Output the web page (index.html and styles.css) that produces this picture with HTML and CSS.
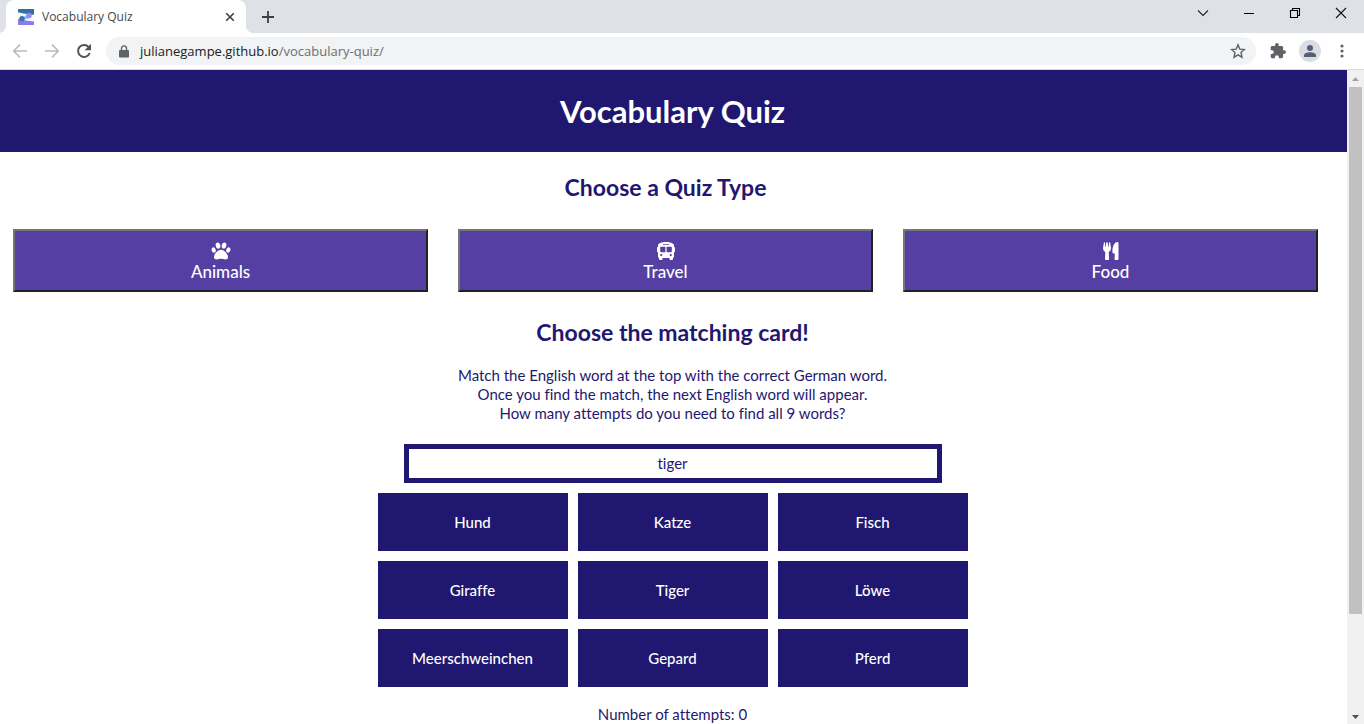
FILE: index.html
```html
<!DOCTYPE html>
<html lang="en">
<head>
<meta charset="utf-8">
<title>Vocabulary Quiz</title>
<link rel="stylesheet" href="styles.css">
</head>
<body>
<div class="tab-strip">
  <div class="tab">
    <svg class="favicon" width="16" height="16" viewBox="0 0 16 16"><path fill="#f4f8ff" d="M0 0h16v16H0z"/><path fill="#33709f" d="M0 0h16v5.500C12 6.500 9 5 6 4.500S2 3.500 0 3.500z"/><path fill="#8f78ee" d="M0 10c3 0 5 1.500 8 1.500s5 1 8 1V16H0z"/><path fill="#8fb8fa" d="M3 8c3 0 5-1 8-2.500l2 3c-3 1-5 2-8 2z"/><circle cx="11" cy="6.500" r="2.700" fill="#8c8cf2"/><circle cx="4" cy="9.700" r="2.700" fill="#3c76a8"/></svg>
    <span class="tab-title">Vocabulary Quiz</span>
    <button class="icon-button" aria-label="Close tab"><svg width="10" height="10" viewBox="0 0 10 10"><path d="M1.200 1.200l7.600 7.600M8.800 1.200L1.200 8.800" stroke="#3c4043" stroke-width="1.600"/></svg></button>
  </div>
  <button class="icon-button new-tab" aria-label="New tab"><svg width="12" height="12" viewBox="0 0 12 12"><path d="M6 0v12M0 6h12" stroke="#3c4043" stroke-width="1.800"/></svg></button>
  <div class="window-controls">
    <button class="icon-button" aria-label="Search tabs"><svg width="12" height="12" viewBox="0 0 12 12"><path d="M1 3.500l5 5 5-5" fill="none" stroke="#222" stroke-width="1.100"/></svg></button>
    <button class="icon-button" aria-label="Minimize"><svg width="12" height="12" viewBox="0 0 12 12"><path d="M1 6.500h10" stroke="#000"/></svg></button>
    <button class="icon-button" aria-label="Restore"><svg width="12" height="12" viewBox="0 0 12 12"><path d="M1.500 3.500h7v7h-7zM3.500 3V1.500h7v7H9" fill="none" stroke="#000" stroke-width="1.100"/></svg></button>
    <button class="icon-button" aria-label="Close window"><svg width="12" height="12" viewBox="0 0 12 12"><path d="M1 1l10 10M11 1L1 11" stroke="#111" stroke-width="1.100"/></svg></button>
  </div>
</div>
<div class="toolbar">
  <div class="nav-buttons">
    <button class="icon-button" aria-label="Back"><svg width="16" height="16" viewBox="0 0 16 16"><path d="M15 8H2M8 1.500L1.800 8 8 14.500" fill="none" stroke="#babcbe" stroke-width="1.700"/></svg></button>
    <button class="icon-button" aria-label="Forward"><svg width="16" height="16" viewBox="0 0 16 16"><path d="M1 8h13M8 1.500L14.200 8 8 14.500" fill="none" stroke="#babcbe" stroke-width="1.700"/></svg></button>
    <button class="icon-button" aria-label="Reload"><svg width="16" height="16" viewBox="0 0 16 16"><path d="M13.700 10A6 6 0 1 1 12.500 3.900" fill="none" stroke="#505458" stroke-width="2"/><path d="M15 .8v6.400H8.600z" fill="#505458"/></svg></button>
  </div>
  <div class="address-bar">
    <svg width="10" height="13" viewBox="0 0 10 13"><path d="M1 5h8a1 1 0 0 1 1 1v5.500a1 1 0 0 1-1 1H1a1 1 0 0 1-1-1V6a1 1 0 0 1 1-1z" fill="#5f6368"/><path d="M2.500 5.500V3.400a2.500 2.500 0 0 1 5 0v2.100" fill="none" stroke="#5f6368" stroke-width="1.400"/></svg>
    <div class="url" role="textbox" contenteditable="true" spellcheck="false" aria-label="Address">julianegampe.github.io<span class="url-path">/vocabulary-quiz/</span></div>
    <button class="icon-button" aria-label="Bookmark this page"><svg width="16" height="16" viewBox="0 0 16 16"><path d="M8 1.800l1.800 4.300 4.700.4-3.500 3.100 1 4.600L8 11.800l-4 2.400 1-4.600-3.500-3.100 4.700-.4z" fill="none" stroke="#5f6368" stroke-width="1.400"/></svg></button>
  </div>
  <div class="toolbar-actions">
    <button class="icon-button" aria-label="Extensions"><svg width="16" height="16" viewBox="1 1 22 22"><path fill="#5f6368" d="M20.500 11H19V7c0-1.100-.9-2-2-2h-4V3.500a2.500 2.500 0 0 0-5 0V5H4c-1.100 0-2 .9-2 2v3.800h1.500a2.700 2.700 0 0 1 0 5.400H2V20c0 1.100.9 2 2 2h3.800v-1.500a2.700 2.700 0 0 1 5.400 0V22H17c1.100 0 2-.9 2-2v-4h1.500a2.500 2.500 0 0 0 0-5z"/></svg></button>
    <button class="icon-button profile" aria-label="Profile"><svg width="14" height="14" viewBox="0 0 14 14"><circle cx="7" cy="4" r="3" fill="#566074"/><path d="M1 13v-1.500C1 9.500 4 8.300 7 8.300s6 1.200 6 3.200V13z" fill="#566074"/></svg></button>
    <button class="icon-button menu" aria-label="Menu"><svg width="4" height="14" viewBox="0 0 4 14"><g fill="#5f6368"><circle cx="2" cy="2" r="1.600"/><circle cx="2" cy="7" r="1.600"/><circle cx="2" cy="12" r="1.600"/></g></svg></button>
  </div>
</div>
<div class="viewport">
  <div class="page">
    <header class="page-header"><h1>Vocabulary Quiz</h1></header>
    <section class="quiz-types">
      <h2>Choose a Quiz Type</h2>
      <div class="type-list">
        <button class="type-button"><svg width="20" height="18" viewBox="0 0 20 18"><g fill="#fff"><ellipse cx="7" cy="3.600" rx="2.300" ry="3.100" transform="rotate(-12 7 3.600)"/><ellipse cx="13" cy="3.600" rx="2.300" ry="3.100" transform="rotate(12 13 3.600)"/><ellipse cx="2.700" cy="8" rx="2" ry="2.700" transform="rotate(-22 2.700 8)"/><ellipse cx="17.300" cy="8" rx="2" ry="2.700" transform="rotate(22 17.300 8)"/><path d="M10 7.800c-3.200 0-7 4.300-7 7.400 0 1.400.9 2.200 2.500 2.200 1.800 0 2.900-.7 4.500-.7s2.700.7 4.500.7c1.600 0 2.500-.8 2.500-2.200 0-3.100-3.800-7.400-7-7.400z"/></g></svg>Animals</button>
        <button class="type-button"><svg width="18" height="18" viewBox="0 0 18 18"><path fill="#fff" fill-rule="evenodd" d="M9 0c4.500 0 8 1.400 8 3.200V5c.6 0 1 .5 1 1v3.200c0 .6-.4 1-1 1v4.200c0 .8-.5 1.200-1 1.400V17a1 1 0 0 1-1 1h-1.500a1 1 0 0 1-1-1v-1h-7v1a1 1 0 0 1-1 1H3a1 1 0 0 1-1-1v-1.200c-.5-.2-1-.6-1-1.400v-4.200c-.6 0-1-.4-1-1V6c0-.5.400-1 1-1V3.200C1 1.400 4.500 0 9 0zM6 2.200v.8h6v-.8zM4.200 4.800c-.6 0-1 .4-1 1v3.400c0 .6.400 1 1 1h4.200V4.800zm5.400 0v5.400h4.200c.6 0 1-.4 1-1V5.800c0-.6-.4-1-1-1zM4.200 12a1.100 1.100 0 1 0 0 2.200 1.100 1.100 0 0 0 0-2.200zm9.600 0a1.100 1.100 0 1 0 0 2.200 1.100 1.100 0 0 0 0-2.200z"/></svg>Travel</button>
        <button class="type-button"><svg width="16" height="18" viewBox="0 0 16 18"><path fill="#fff" d="M.9.500Q1.400 0 2 .5l.3 4.300h.5L3.200.5Q4 0 4.800.5l.4 4.300h.5L6 .5q.6-.5 1.100 0L8 6c0 2-.8 3.300-2.300 4l.4 7q0 1-1 1H3q-1 0-1-1l.3-7C.8 9.300 0 8 0 6zM14.500 0q1 0 1 1v16q0 1-1 1h-2q-1 0-1-1l.4-5.500H10.500q-.9 0-1-.9C9 5.500 11 0 14.500 0z"/></svg>Food</button>
      </div>
    </section>
    <main class="quiz">
      <h2>Choose the matching card!</h2>
      <p class="intro">Match the English word at the top with the correct German word.<br>Once you find the match, the next English word will appear.<br>How many attempts do you need to find all 9 words?</p>
      <div class="prompt">tiger</div>
      <div class="cards">
        <button class="card">Hund</button><button class="card">Katze</button><button class="card">Fisch</button>
        <button class="card">Giraffe</button><button class="card">Tiger</button><button class="card">Löwe</button>
        <button class="card">Meerschweinchen</button><button class="card">Gepard</button><button class="card">Pferd</button>
      </div>
      <p class="attempts">Number of attempts: 0</p>
    </main>
  </div>
  <div class="scrollbar" aria-hidden="true">
    <svg width="17" height="17" viewBox="0 0 17 17"><path d="M5 11l3.500-4 3.500 4z" fill="#a3a3a3"/></svg>
    <div class="track"><div class="thumb"></div></div>
    <svg width="17" height="17" viewBox="0 0 17 17"><path d="M5 8l3.500 4L12 8z" fill="#505050"/></svg>
  </div>
</div>
</body>
</html>
```
FILE: styles.css
```css
* { box-sizing: border-box; }

body {
  margin: 0;
  height: 100vh;
  display: flex;
  flex-direction: column;
  overflow: hidden;
  background: #fff;
  color: #1f1770;
  font-family: Lato, "Liberation Sans", sans-serif;
  font-size: 15px;
  font-variant-ligatures: none;
}

h1, h2, p { margin: 0; }
button { font-family: inherit; font-variant-ligatures: inherit; }
svg { display: block; flex: none; }

.icon-button {
  display: flex;
  align-items: center;
  justify-content: center;
  padding: 0;
  border: 0;
  background: none;
}

/* Browser frame */
.tab-strip {
  flex: none;
  display: flex;
  height: 33px;
  padding-left: 6px;
  background: #dee1e6;
  font-family: "Open Sans", "Noto Sans", sans-serif;
}
.tab {
  position: relative;
  display: flex;
  align-items: center;
  gap: 8px;
  width: 240px;
  padding: 0 11px 0 12px;
  border-radius: 8px 8px 0 0;
  background: #fff;
}
.tab::before, .tab::after {
  content: "";
  position: absolute;
  bottom: 0;
  width: 8px;
  height: 8px;
}
.tab::before { right: 100%; background: radial-gradient(circle at 0 0, #dee1e6 8px, #fff 8px); }
.tab::after { left: 100%; background: radial-gradient(circle at 100% 0, #dee1e6 8px, #fff 8px); }
.tab-title { flex: 1; font-size: 12px; color: #45484c; }
.new-tab { width: 44px; }
.window-controls { display: flex; margin-left: auto; }
.window-controls .icon-button { width: 46px; height: 26px; }

.toolbar {
  flex: none;
  display: flex;
  align-items: center;
  gap: 14px;
  height: 37px;
  padding: 0 20px 0 12px;
  border-bottom: 1px solid #dadce0;
  background: #fff;
}
.nav-buttons { display: flex; gap: 16px; }
.address-bar {
  flex: 1;
  display: flex;
  align-items: center;
  gap: 11px;
  height: 28px;
  padding: 0 10px 0 13px;
  border-radius: 14px;
  background: #f1f3f4;
}
.url {
  flex: 1;
  font-family: "Open Sans", "Noto Sans", sans-serif;
  font-size: 13px;
  line-height: 20px;
  color: #202124;
}
.url-path { color: #6a6e73; }
.toolbar-actions { display: flex; align-items: center; gap: 13px; }
.profile { width: 22px; height: 22px; border-radius: 50%; background: #dadde3; }
.menu { padding-left: 6px; }

/* Page area and scrollbar */
.viewport { flex: 1; display: flex; min-height: 0; }
.page { flex: 1; overflow: hidden; text-align: center; }
.scrollbar { display: flex; flex-direction: column; width: 17px; background: #f1f1f1; }
.track { flex: 1; padding: 0 2px; }
.thumb { height: 85%; background: #c1c1c1; }

.page-header { padding: 20px 2px 20px 0; background: #1f1770; color: #fff; }
h1 { font-size: 31px; line-height: 42px; }
h2 { font-size: 23px; line-height: 30px; }

.quiz-types { padding: 20px 29px 0 13px; }
.type-list { display: grid; grid-template-columns: repeat(3, 1fr); gap: 30px; margin-top: 27px; }
.type-button {
  display: flex;
  flex-direction: column;
  align-items: center;
  gap: 1px;
  padding: 11px 6px 7px;
  border: 2px solid;
  border-color: #767676 #212121 #212121 #767676;
  background: #563fa2;
  color: #fff;
  font-size: 17px;
  font-weight: 500;
  line-height: 22px;
}

.quiz { display: flex; flex-direction: column; align-items: center; padding: 25px 2px 0 0; }
.intro { margin-top: 19px; line-height: 19px; }
.prompt {
  width: 40%;
  margin-top: 21px;
  padding: 5px;
  border: 5px solid #1f1770;
  line-height: 19px;
}
.cards { display: grid; grid-template-columns: repeat(3, 190px); gap: 10px; margin-top: 10px; }
.card {
  padding: 19px 10px;
  border: 0;
  background: #1f1770;
  color: #fff;
  font-size: 15px;
  font-weight: 500;
  line-height: 20px;
}
.attempts { margin-top: 18px; line-height: 19px; }
```
